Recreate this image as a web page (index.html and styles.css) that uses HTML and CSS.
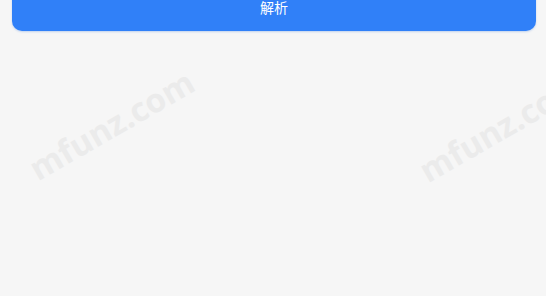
FILE: index.html
```html
<!DOCTYPE html>
<html lang="zh">
<head>
<meta charset="utf-8">
<title>解析</title>
<link rel="stylesheet" href="styles.css">
</head>
<body>
<main class="page">
  <button class="parse-btn" type="button">解析</button>
  <div class="watermark wm-left">mfunz.com</div>
  <div class="watermark wm-right">mfunz.com</div>
</main>
</body>
</html>
```
FILE: styles.css
```css
html, body {
  margin: 0;
  padding: 0;
  background: #ffffff;
}
.page {
  position: relative;
  height: 296px;
  width: 546px;
  background: #f6f6f6;
  overflow: hidden;
  display: flex;
  flex-direction: column;
  font-family: "Noto Sans CJK SC", "Noto Sans", sans-serif;
}
.parse-btn {
  margin: -14px 10px 0 12px;
  height: 45px;
  border: 0;
  border-radius: 10px;
  background: #3080f8;
  color: #ffffff;
  font-family: "Noto Sans CJK SC", "Noto Sans", sans-serif;
  font-size: 14px;
  padding: 0 0 16px;
  display: flex;
  align-items: flex-end;
  justify-content: center;
  line-height: 16px;
  box-shadow: 0 1px 2px rgba(40, 110, 220, 0.25);
}
.watermark {
  position: absolute;
  font-family: "Open Sans", sans-serif;
  font-weight: 700;
  font-size: 33px;
  color: #ebebeb;
  transform: rotate(-30deg);
  transform-origin: 0 100%;
  white-space: nowrap;
  line-height: 1;
}
.wm-left {
  left: 40px;
  top: 152px;
}
.wm-right {
  left: 430px;
  top: 154px;
}
```
